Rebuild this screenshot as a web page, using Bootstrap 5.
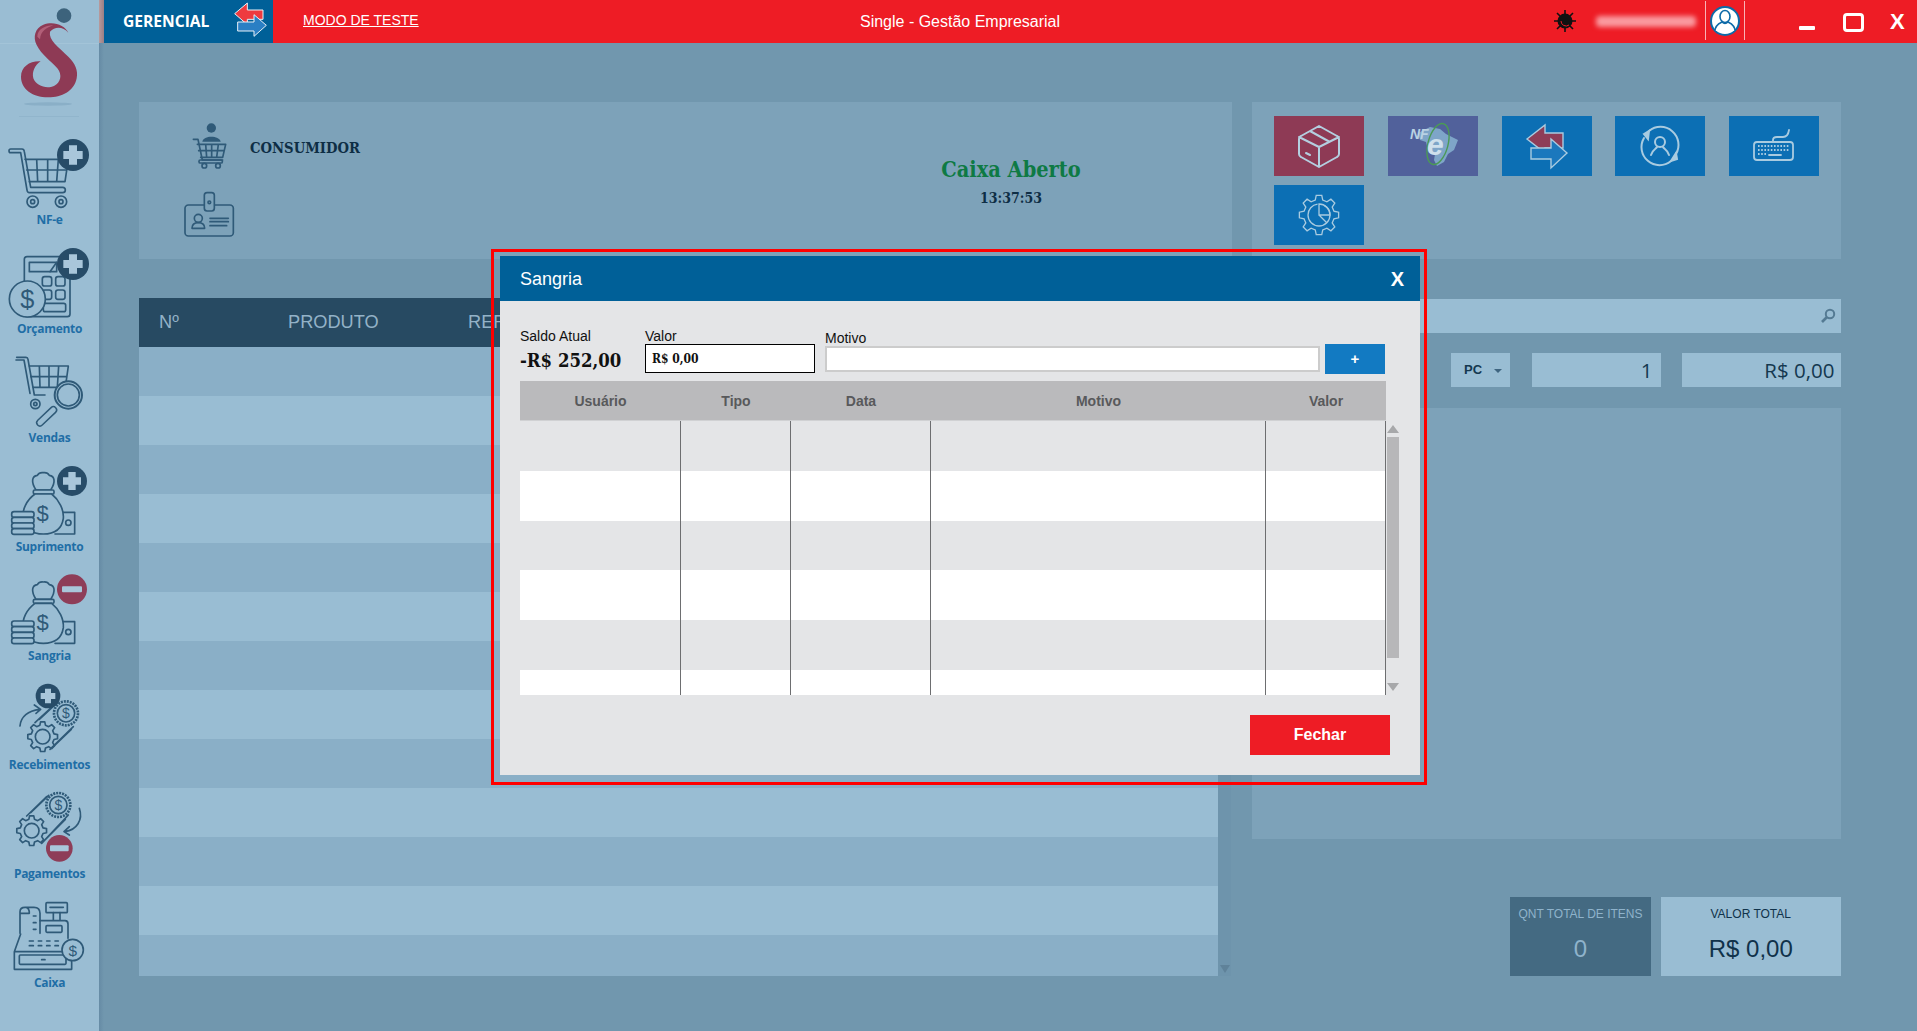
<!DOCTYPE html>
<html lang="pt-BR">
<head>
<meta charset="utf-8">
<title>Single - Gestão Empresarial</title>
<link href="https://cdn.jsdelivr.net/npm/bootstrap@5.3.0/dist/css/bootstrap.min.css" rel="stylesheet">
<style>
html,body{height:100%}
body{margin:0;background:#7197ae;font-family:"Liberation Sans",Arial,sans-serif;overflow:hidden;color:#14384f}
.app{width:1917px;height:1031px;position:relative}
.side{width:99px;background:#9abdd3;flex:none;height:1031px}
.edge{width:5px;flex:none;background:linear-gradient(90deg,#668ba5,#7197ae)}
.mainc{width:1813px;flex:none}
.logo{height:128px;display:block}
.sitem{height:109px;text-align:center}
.sitem svg{display:block;width:99px;height:84px}
.slabel{font:700 12px/16px "Open Sans","Noto Sans",sans-serif;color:#1f6ea6;letter-spacing:-.3px}
.ln{fill:none;stroke:#2f5a78;stroke-width:5;stroke-linecap:round;stroke-linejoin:round}
.lnf{fill:#9abdd3;stroke:#2f5a78;stroke-width:5;stroke-linejoin:round}
.dol{fill:#2f5a78;font-family:"Liberation Sans",sans-serif;text-anchor:middle}
.topb{height:43px;margin-left:-5px;width:1818px}
.topedge{width:5px;background:linear-gradient(90deg,#b89a9c,#9a7f85)}
.tnav{width:169px;background:#006098;padding-left:19px;color:#fff;font:700 15.6px/43px "Open Sans",sans-serif}
.tnav svg{margin-left:24px;display:block}
.tred{background:#ee1c25;flex:1;color:#fff}
.tmodo{width:487px;padding-left:30px;font-size:14px;line-height:41px}
.tmodo a{color:#fff}
.ttitle{width:400px;text-align:center;font-size:16px;line-height:43px}
.tbug{margin-left:395px;width:20px}
.tbug svg{display:block;margin:8px 0 0 -2px}
.tblur{margin-left:21px;width:100px;height:11px;border-radius:4px;background:#fa9aa0;filter:blur(2.5px)}
.tuser{margin-left:9px;width:40px;height:39px;margin-top:1px;border-left:1px solid #f9b3b6;border-right:1px solid #f9b3b6}
.wmin{margin-left:54px;width:16px;height:4px;background:#fff;border-radius:1px;margin-top:26px}
.wmax{margin-left:28px;width:21px;height:19px;border:3px solid #fff;border-radius:4px;margin-top:13px}
.wclose{margin-left:26px;font:700 22px/43px "Liberation Sans",sans-serif}
.cont{padding:59px 76px 0 35px}
.lcol{width:1093px;flex:none}
.rcol{width:589px;flex:none;margin-left:20px}
.pane{background:#7da2b9}
.pcust{height:157px}
.pcust svg{width:111px;height:157px;flex:none;display:block}
.consum{width:661px;padding-top:36px;font:700 14.7px/20px "DejaVu Serif Condensed","DejaVu Serif",serif;color:#0e2e45}
.cstat{width:200px;padding-top:54px;text-align:center}
.cab{font:700 21.6px/28px "DejaVu Serif Condensed","DejaVu Serif",serif;color:#0e7a44}
.ctime{font:700 14px/18px "DejaVu Serif Condensed","DejaVu Serif",serif;color:#0e2e45;margin-top:5px}
.ghead{margin-top:39px;height:49px;background:#274a62;color:#93b2c7;font-size:18.2px;line-height:49px;width:1092px}
.ghead span{display:block}
.gh1{margin-left:20px;width:129px}.gh2{width:180px}
.gbody{width:1092px;height:629px}
.grows{width:1079px}
.grow{height:49px}
.grow:nth-child(odd){background:#8aafc7}
.grow:nth-child(even){background:#99bdd3}
.grow.last{height:41px}
.gscroll{width:13px;background:#6e94ac;position:relative}
.gscroll i{position:absolute;left:2px;bottom:3px;border:5px solid transparent;border-top:8px solid #5f8299;border-bottom:0}
.ptiles{height:157px;padding:14px 21px 0 22px;row-gap:9px;column-gap:23.8px}
.tile{width:90px;height:60px;padding:0;border:0;border-radius:0;display:block}
.tile svg{display:block}
.tblue{background:#0c6fb4}.twine{background:#8e3a55}.tpurp{background:#51619b}
.srch{margin-top:40px;height:34px;background:#99bdd3;padding-right:5px}
.qrow{margin-top:20px;height:34px}
.qbox{background:#99bdd3;color:#14384f;font:400 20.5px/35px "Open Sans",sans-serif;text-align:right;padding-right:7px}
.qpc{width:59px;margin-left:199px;font:700 13px/34px "Liberation Sans",sans-serif;text-align:left;padding-left:13px;position:relative}
.qpc i{position:absolute;right:8px;top:16px;border:4px solid transparent;border-top:4px solid #3f6580;border-bottom:0}
.qty{width:129px;margin-left:21.5px;padding-right:8px}
.qval{width:159px;margin-left:21px;padding-right:6px}
.plower{margin-top:21px;height:431px}
.totals{margin-top:58px;height:79px;justify-content:flex-end;gap:9.5px}
.tot{text-align:center;font-size:12px}
.tcap{line-height:14px;padding-top:10px}
.tval{font-size:24px;line-height:28px;margin-top:14px}
.tdark{width:141px;background:#446a82;color:#8fb3cb}
.tlight{width:180.5px;background:#99bdd3;color:#10324a}
.redbox{position:absolute;left:491px;top:249px;width:936px;height:536px;border:3px solid #f00;padding:4px 4px 7px 6px}
.sgm{background:#e4e5e7;border:0;border-radius:0;width:920px;height:519px;color:#111}
.sgh{background:#006098;color:#fff;height:45px;padding:1px 15px 0 20px;border:0;border-radius:0;font-size:18px}
.sgx{font-weight:700;font-size:20px;margin-right:1px}
.sgb{padding:24px 0 0 20px;flex:none}
.frow{height:56px}
.lbl{font-size:14px;line-height:16px}
.fsaldo{width:125px;padding-top:3px}
.fbig{font:700 18.4px/28px "DejaVu Serif Condensed","DejaVu Serif",serif;color:#111;margin-top:3px}
.fval{width:170px;margin-right:10px;padding-top:3px}
.fval .form-control{height:29px;border:1.5px solid #000;border-radius:0;padding:0 6px;font:700 12px/25px "DejaVu Serif Condensed","DejaVu Serif",serif;color:#111;min-height:0;background:#fff}
.fmot{width:495px;margin-right:5px;padding-top:5px}
.fmot .form-control{height:26px;border:2px solid #ccc;border-radius:0;min-height:0;padding:0 4px}
.fadd{width:60px;height:30px;margin-top:19px;background:#127ac2;color:#fff;border:0;border-radius:0;padding:0;font:700 15px/28px "Liberation Sans",sans-serif}
.gridw{width:866px;height:314px;overflow:hidden;flex:none}
.sgt{table-layout:fixed;width:866px;border-collapse:separate;border-spacing:0;margin:0;--bs-table-bg:transparent}
.sgt th{background:#bababc;color:#58595b;font-size:14px;line-height:16px;text-align:center;height:40px;padding:0;border:0;vertical-align:middle;border-bottom:1px solid #d0d1d3}
.sgt td{height:49.8px;padding:0;border:0;border-right:1px solid #6d6e70}
.sgt tr.a td{background:#e4e5e7}
.sgt tr.b td{background:#fff}
.c1{width:161px}.c2{width:110px}.c3{width:140px}.c4{width:335px}.c5{width:120px}
.sbar{width:12px;margin-left:1px;padding-top:44px;flex:none}
.sup{display:block;width:0;border:6px solid transparent;border-top:0;border-bottom:8px solid #a7a8aa}
.sdn{display:block;width:0;border:6px solid transparent;border-bottom:0;border-top:8px solid #a7a8aa;margin-top:25px}
.sth{display:block;height:221px;background:#b7b7b9;margin-top:4px}
.sfoot{padding-right:30px;margin-top:20px}
.fech{width:140px;height:40px;background:#ee1c25;color:#fff;border:0;border-radius:0;font-weight:700;font-size:16px;padding:0}
</style>
</head>
<body>
<svg width="0" height="0" class="position-absolute">
<defs>
<path id="gear" d="M34 -8.5 L44.6 -6.3 V6.3 L34 8.5 L30 18 L35.9 27.1 L27.1 35.9 L18 30 L8.5 34 L6.3 44.6 H-6.3 L-8.5 34 L-18 30 L-27.1 35.9 L-35.9 27.1 L-30 18 L-34 8.5 L-44.6 6.3 V-6.3 L-34 -8.5 L-30 -18 L-35.9 -27.1 L-27.1 -35.9 L-18 -30 L-8.5 -34 L-6.3 -44.6 H6.3 L8.5 -34 L18 -30 L27.1 -35.9 L35.9 -27.1 L30 -18 Z"/>
<g id="bag">
<path class="lnf" d="M108 450 C92 425 96 408 112 406 Q118 396 130 398 Q142 396 148 406 C164 408 168 425 152 450 Z"/>
<rect class="lnf" x="100" y="450" width="62" height="12" rx="4"/>
<path class="ln" d="M190 517 H224 V582 H165"/>
<circle class="ln" cx="205" cy="548" r="8"/>
<path class="lnf" d="M105 462 C80 480 65 510 70 535 C75 570 100 582 130 582 C160 582 185 570 190 535 C192 510 178 480 155 462 Z"/>
<text class="dol" x="128" y="543" font-size="66">$</text>
<rect class="lnf" x="35" y="515" width="67" height="17" rx="7"/>
<rect class="lnf" x="35" y="532" width="67" height="17" rx="7"/>
<rect class="lnf" x="35" y="549" width="67" height="17" rx="7"/>
<rect class="lnf" x="35" y="566" width="67" height="17" rx="7"/>
</g>
<g id="coinb">
<circle cx="0" cy="0" r="36" fill="#9abdd3" stroke="#2f5a78" stroke-width="8" stroke-dasharray="6 3"/>
<circle class="ln" cx="0" cy="0" r="26"/>
<text class="dol" x="0" y="15" font-size="42">$</text>
</g>
<g id="arrows">
<path fill="#ee3a3f" stroke="#e8f0f6" stroke-width="3" d="M707 45 L745 13 V34 H792 V62 H745 V78 Z"/>
<path fill="#2a7fc4" stroke="#e8f0f6" stroke-width="3" d="M802 80 L765 48 V70 H716 V97 H765 V113 Z"/>
</g>
</defs>
</svg>

<div class="app d-flex">
<aside class="side">
<svg class="logo" width="99" height="128" viewBox="0 0 297 384">
<rect x="0" y="129" width="297" height="2" fill="#a9c8dc"/>
<ellipse cx="144" cy="312" rx="72" ry="5" fill="#8aafc7"/>
<rect x="57" y="348" width="180" height="2" fill="#8db1c9"/>
<circle cx="192" cy="47" r="22" fill="#3d637c"/>
<path fill="#8e3a55" d="M205 98 C190 80 165 78 150 95 C145 120 175 140 205 170 C225 190 235 210 230 235 C222 275 185 292 145 292 C95 292 63 265 63 230 C63 200 90 182 122 184 C105 195 95 215 100 235 C108 258 140 268 162 258 C182 248 188 225 172 205 C150 180 125 165 110 135 C98 110 105 85 130 74 C160 62 195 75 205 98 Z"/>
<path fill="#b25f78" d="M112 110 C112 88 135 76 160 76 C140 84 122 92 120 118 Z"/>
</svg>

<div class="sitem"><svg viewBox="0 384 297 252">
<path class="ln" d="M32 447 H66 Q72 447 73 455 L92 562 H188 Q196 562 196 570 Q196 578 188 578 H88 Q82 578 81 570 L62 458 H32 Q27 458 27 452 Q27 447 32 447 Z"/>
<path class="ln" d="M75 478 H205 L195 545 H88 M110 478 L113 545 M143 478 V545 M175 478 L170 545 M80 510 H200"/>
<circle class="ln" cx="98" cy="605" r="17"/><circle class="ln" cx="98" cy="605" r="6"/>
<circle class="ln" cx="183" cy="605" r="17"/><circle class="ln" cx="183" cy="605" r="6"/>
<circle cx="219" cy="465" r="48" fill="#274c68"/>
<path fill="#a9c6da" d="M207 436 H231 V453 H248 V477 H231 V494 H207 V477 H190 V453 H207 Z"/>
</svg><div class="slabel">NF-e</div></div>

<div class="sitem"><svg viewBox="0 711 297 252">
<rect class="ln" x="73" y="770" width="137" height="180" rx="8"/>
<rect class="ln" x="88" y="787" width="82" height="28"/>
<path class="ln" d="M150 815 L170 787"/>
<rect class="ln" x="127" y="830" width="28" height="28" rx="7"/><rect class="ln" x="167" y="830" width="28" height="28" rx="7"/>
<rect class="ln" x="127" y="870" width="28" height="28" rx="7"/><rect class="ln" x="167" y="870" width="28" height="28" rx="7"/>
<rect class="ln" x="130" y="910" width="67" height="25" rx="6"/>
<circle class="lnf" cx="82" cy="897" r="54"/>
<text class="dol" x="82" y="924" font-size="76">$</text>
<circle cx="219" cy="792" r="48" fill="#274c68"/>
<path fill="#a9c6da" d="M207 763 H231 V780 H248 V804 H231 V821 H207 V804 H190 V780 H207 Z"/>
</svg><div class="slabel">Orçamento</div></div>

<div class="sitem"><svg viewBox="0 18 297 252">
<path class="ln" d="M50 52 H78 Q83 52 84 58 L103 165 H135 M48 60 H72 L90 160"/>
<path class="ln" d="M88 78 H205 L196 142 H100 M118 78 L120 142 M147 78 V142 M176 78 L172 142 M93 110 H200"/>
<circle class="ln" cx="106" cy="192" r="14"/><circle class="ln" cx="106" cy="192" r="5"/>
<path fill="none" stroke="#2f5a78" stroke-width="24" stroke-linecap="round" d="M160 210 L120 248"/>
<path fill="none" stroke="#9abdd3" stroke-width="15" stroke-linecap="round" d="M160 210 L120 248"/>
<circle cx="205" cy="165" r="41" fill="#9abdd3" stroke="#2f5a78" stroke-width="6"/>
<circle class="ln" cx="205" cy="165" r="33"/>
</svg><div class="slabel">Vendas</div></div>

<div class="sitem"><svg viewBox="0 345 297 252">
<use href="#bag"/>
<circle cx="216" cy="423" r="45" fill="#274c68"/>
<path fill="#a9c6da" d="M205 396 H227 V412 H243 V434 H227 V450 H205 V434 H189 V412 H205 Z"/>
</svg><div class="slabel">Suprimento</div></div>

<div class="sitem"><svg viewBox="0 672 297 252">
<use href="#bag" y="328"/>
<circle cx="216" cy="748" r="45" fill="#8e3d58"/>
<rect x="186" y="739" width="60" height="18" rx="3" fill="#a9c6da"/>
</svg><div class="slabel">Sangria</div></div>

<div class="sitem"><svg viewBox="0 -21 297 252">
<path class="ln" d="M105 128 L165 72 M150 208 L220 140 M118 118 L172 68 M160 200 L214 148"/>
<use href="#gear" class="ln" transform="translate(128 170)"/>
<circle class="ln" cx="128" cy="170" r="22"/>
<use href="#coinb" transform="translate(198 100)"/>
<path class="ln" d="M60 138 C62 110 85 92 118 88 M103 75 L122 88 L108 100"/>
<circle cx="144" cy="48" r="37" fill="#274c68"/>
<path fill="#a9c6da" d="M135 26 H153 V39 H166 V57 H153 V70 H135 V57 H122 V39 H135 Z"/>
</svg><div class="slabel">Recebimentos</div></div>

<div class="sitem"><svg viewBox="0 306 297 252">
<path class="ln" d="M80 408 L140 350 M125 490 L205 405 M92 398 L146 346 M135 480 L196 418"/>
<use href="#gear" class="ln" transform="translate(95 452)"/>
<circle class="ln" cx="95" cy="452" r="22"/>
<use href="#coinb" transform="translate(175 375)"/>
<path class="ln" d="M238 385 C250 420 230 450 195 455 M208 440 L192 455 L208 465"/>
<circle cx="178" cy="505" r="40" fill="#8e3d58"/>
<rect x="150" y="496" width="56" height="18" rx="3" fill="#a9c6da"/>
</svg><div class="slabel">Pagamentos</div></div>

<div class="sitem"><svg viewBox="0 633 297 252">
<path class="ln" d="M60 760 V695 Q60 682 75 682 H102 Q120 682 120 700 V760 M78 682 Q88 684 88 700 H60 M100 708 H108 M100 728 H108 M100 748 H108"/>
<rect class="ln" x="138" y="668" width="64" height="30" rx="3"/>
<path class="ln" d="M150 682 H190 M160 698 V722 M180 698 V722 M120 722 H195 Q204 722 204 732 V775"/>
<rect class="ln" x="138" y="737" width="48" height="20" rx="3"/>
<path class="ln" d="M88 783 H100 M115 783 H125 M140 783 H150 M165 783 H175 M88 797 H100 M115 797 H125 M140 797 H150 M165 797 H175"/>
<path class="ln" d="M62 762 L43 815 V868 H215 V845 M43 815 H190"/>
<rect class="ln" x="58" y="825" width="140" height="28" rx="3"/>
<path class="ln" d="M125 839 H135"/>
<circle class="lnf" cx="218" cy="810" r="32"/>
<text class="dol" x="218" y="827" font-size="46">$</text>
</svg><div class="slabel">Caixa</div></div>
</aside>
<div class="edge"></div>

<div class="mainc">
<header class="topb d-flex">
<div class="topedge"></div>
<div class="tnav d-flex">GERENCIAL
<svg width="35" height="40" viewBox="702 4 105 120"><use href="#arrows"/></svg>
</div>
<div class="tred d-flex align-items-start">
<div class="tmodo"><a href="#">MODO DE TESTE</a></div>
<div class="ttitle">Single - Gestão Empresarial</div>
<div class="tbug"><svg width="24" height="26" viewBox="0 0 24 26">
<g stroke="#111" stroke-width="1.6"><path d="M12 2 V6 M12 20 V24 M1 13 H5 M19 13 H23 M4 5 L7 8 M20 5 L17 8 M4 21 L7 18 M20 21 L17 18"/></g>
<circle cx="12" cy="13" r="7.5" fill="#111"/><path d="M8 13 a5 5 0 0 0 8 4" stroke="#ee1c25" stroke-width="1" fill="none"/></svg></div>
<div class="tblur mt-3"></div>
<div class="tuser"><svg class="d-block" width="38" height="39" viewBox="0 0 38 39">
<circle cx="19" cy="20" r="14" fill="#fff" stroke="#0d6aa8" stroke-width="2"/>
<ellipse cx="19" cy="15.5" rx="5" ry="6" fill="#fff" stroke="#0d6aa8" stroke-width="1.6"/>
<path d="M9 30 C9 24 14 22 16 21 Q19 24 22 21 C24 22 29 24 29 30" fill="#fff" stroke="#0d6aa8" stroke-width="1.6"/></svg></div>
<div class="wmin"></div>
<div class="wmax"></div>
<div class="wclose">X</div>
</div>
</header>

<div class="cont d-flex">
<section class="lcol">
<div class="pane pcust d-flex">
<svg viewBox="417 306 333 471">
<g fill="#2f5a78"><circle cx="634" cy="384" r="14"/><path d="M607 425 C610 405 658 405 662 425 Z"/></g>
<path class="ln" d="M580 418 H594 L607 480 H668 M592 433 H677 L668 472 H602 M617 433 L620 472 M635 433 V472 M655 433 L650 472 M596 452 H672"/>
<rect class="ln" x="597" y="480" width="70" height="9" rx="4"/>
<circle class="ln" cx="613" cy="497" r="7"/><circle class="ln" cx="654" cy="497" r="7"/>
<rect class="ln" x="555" y="615" width="145" height="93" rx="10"/>
<rect fill="#7da2b9" stroke="#2f5a78" stroke-width="5" x="613" y="578" width="30" height="55" rx="8"/>
<circle class="ln" cx="628" cy="607" r="4"/>
<circle class="ln" cx="595" cy="655" r="12"/>
<path class="ln" d="M576 685 C576 670 585 668 595 668 C605 668 614 670 614 685 Z"/>
<path class="ln" d="M630 655 H685 M630 665 H685 M630 677 H680"/>
</svg>
<div class="consum">CONSUMIDOR</div>
<div class="cstat"><div class="cab">Caixa Aberto</div><div class="ctime">13:37:53</div></div>
</div>
<div class="ghead d-flex"><span class="gh1">Nº</span><span class="gh2">PRODUTO</span><span>REF</span></div>
<div class="gbody d-flex">
<div class="grows">
<div class="grow"></div><div class="grow"></div><div class="grow"></div><div class="grow"></div><div class="grow"></div><div class="grow"></div><div class="grow"></div><div class="grow"></div><div class="grow"></div><div class="grow"></div><div class="grow"></div><div class="grow"></div><div class="grow last"></div>
</div>
<div class="gscroll"><i></i></div>
</div>
</section>

<section class="rcol">
<div class="pane ptiles d-flex flex-wrap align-content-start">
<button class="btn tile twine" type="button"><svg width="90" height="60" viewBox="0 0 90 60" fill="none" stroke="#b4cfe0" stroke-width="2" stroke-linejoin="round" stroke-linecap="round"><path d="M45 10 L63 20 Q65 21 65 23 V38 Q65 40 63 41 L45 51 L27 41 Q25 40 25 38 V23 Q25 21 27 20 Z M25 21 L45 31 L65 21 M45 31 V51 M36 15 L55 25.5 M32 37 L36 39"/></svg></button>
<button class="btn tile tpurp" type="button"><svg width="90" height="60" viewBox="0 0 90 60"><path fill="#7ea5c8" d="M30 17 L42 11 L52 13 L58 18 L70 24 L66 34 L60 38 L56 46 L49 50 L46 44 L47 38 L40 34 L38 26 L32 24 Z"/><ellipse cx="50" cy="28" rx="10" ry="21" transform="rotate(15 50 28)" fill="none" stroke="#4b9a55" stroke-width="1.4"/><text x="22" y="23" font-family="Liberation Sans" font-weight="700" font-style="italic" font-size="14" fill="#b9d2e4">NF</text><text x="39" y="39" font-family="Liberation Sans" font-weight="700" font-style="italic" font-size="30" fill="#cfe0ec">e</text></svg></button>
<button class="btn tile tblue" type="button"><svg width="90" height="60" viewBox="0 0 90 60" stroke="#a9cbe0" stroke-width="1.4"><path fill="#8e3d58" d="M25 23 L43 9 V17 H61 V32 H43 V37 Z"/><path fill="#1b78bd" d="M65 37 L49 23 V32 H29 V43 H49 V52 Z"/></svg></button>
<button class="btn tile tblue" type="button"><svg width="90" height="60" viewBox="0 0 90 60" fill="none" stroke="#a9cbe0" stroke-width="2" stroke-linecap="round"><path d="M34 15 A18 18 0 0 1 61 38 M56 45 A18 18 0 0 1 29 22"/><path fill="#a9cbe0" d="M29 18 L34 15 L33 23 Z M62 43 L56 45 L61 37 Z"/><circle cx="45" cy="26" r="5"/><path d="M36 39 C38 33 41 33 42 31 M54 39 C52 33 49 33 48 31"/></svg></button>
<button class="btn tile tblue" type="button"><svg width="90" height="60" viewBox="0 0 90 60" fill="none" stroke="#a9cbe0" stroke-width="1.8" stroke-linecap="round"><rect x="25" y="26" width="39" height="18" rx="3"/><path d="M44 26 V24 Q44 21 48 21 H54 Q59 21 60 14"/><path stroke-width="2" stroke-dasharray="1.6 1.6" stroke-linecap="butt" d="M29 30 H60 M29 34 H60 M29 38 H38"/><path d="M40 39 H52"/></svg></button>
<button class="btn tile tblue" type="button"><svg width="90" height="60" viewBox="0 0 90 60"><use href="#gear" transform="translate(45 30) scale(.44)" fill="none" stroke="#a9cbe0" stroke-width="3"/><g fill="none" stroke="#a9cbe0" stroke-width="1.3"><circle cx="45" cy="30" r="11" stroke-dasharray="50 7"/><path d="M45 30 V19 A11 11 0 0 1 56 30 Z M45 30 L53 38"/></g></svg></button>
</div>
<div class="srch d-flex justify-content-end align-items-center"><svg width="16" height="16" viewBox="0 0 16 16" fill="none" stroke="#547a93" stroke-width="2"><circle cx="10" cy="6" r="4.2"/><path stroke-width="2.6" d="M7 9 L2 14"/></svg></div>
<div class="qrow d-flex">
<div class="qbox qpc">PC<i></i></div>
<div class="qbox qty">1</div>
<div class="qbox qval">R$ 0,00</div>
</div>
<div class="pane plower"></div>
<div class="totals d-flex">
<div class="tot tdark"><div class="tcap">QNT TOTAL DE ITENS</div><div class="tval">0</div></div>
<div class="tot tlight"><div class="tcap">VALOR TOTAL</div><div class="tval">R$ 0,00</div></div>
</div>
</section>
</div>
</div>

<div class="redbox">
<div class="modal-content sgm">
<div class="modal-header sgh d-flex justify-content-between align-items-center"><span>Sangria</span><span class="sgx">X</span></div>
<div class="modal-body sgb">
<div class="frow d-flex align-items-start">
<div class="fsaldo"><div class="lbl">Saldo Atual</div><div class="fbig">-R$ 252,00</div></div>
<div class="fval"><label class="lbl d-block">Valor</label><input class="form-control" value="R$ 0,00"></div>
<div class="fmot"><label class="lbl d-block">Motivo</label><input class="form-control"></div>
<button class="btn fadd" type="button">+</button>
</div>
<div class="d-flex">
<div class="gridw">
<table class="table sgt">
<colgroup><col class="c1"><col class="c2"><col class="c3"><col class="c4"><col class="c5"></colgroup>
<thead><tr><th>Usuário</th><th>Tipo</th><th>Data</th><th>Motivo</th><th>Valor</th></tr></thead>
<tbody>
<tr class="a"><td></td><td></td><td></td><td></td><td></td></tr>
<tr class="b"><td></td><td></td><td></td><td></td><td></td></tr>
<tr class="a"><td></td><td></td><td></td><td></td><td></td></tr>
<tr class="b"><td></td><td></td><td></td><td></td><td></td></tr>
<tr class="a"><td></td><td></td><td></td><td></td><td></td></tr>
<tr class="b"><td></td><td></td><td></td><td></td><td></td></tr>
</tbody>
</table>
</div>
<div class="sbar"><span class="sup"></span><span class="sth"></span><span class="sdn"></span></div>
</div>
<div class="sfoot d-flex justify-content-end"><button class="btn fech" type="button">Fechar</button></div>
</div>
</div>
</div>
</div>
<script src="https://cdn.jsdelivr.net/npm/bootstrap@5.3.0/dist/js/bootstrap.bundle.min.js"></script>
</body>
</html>
